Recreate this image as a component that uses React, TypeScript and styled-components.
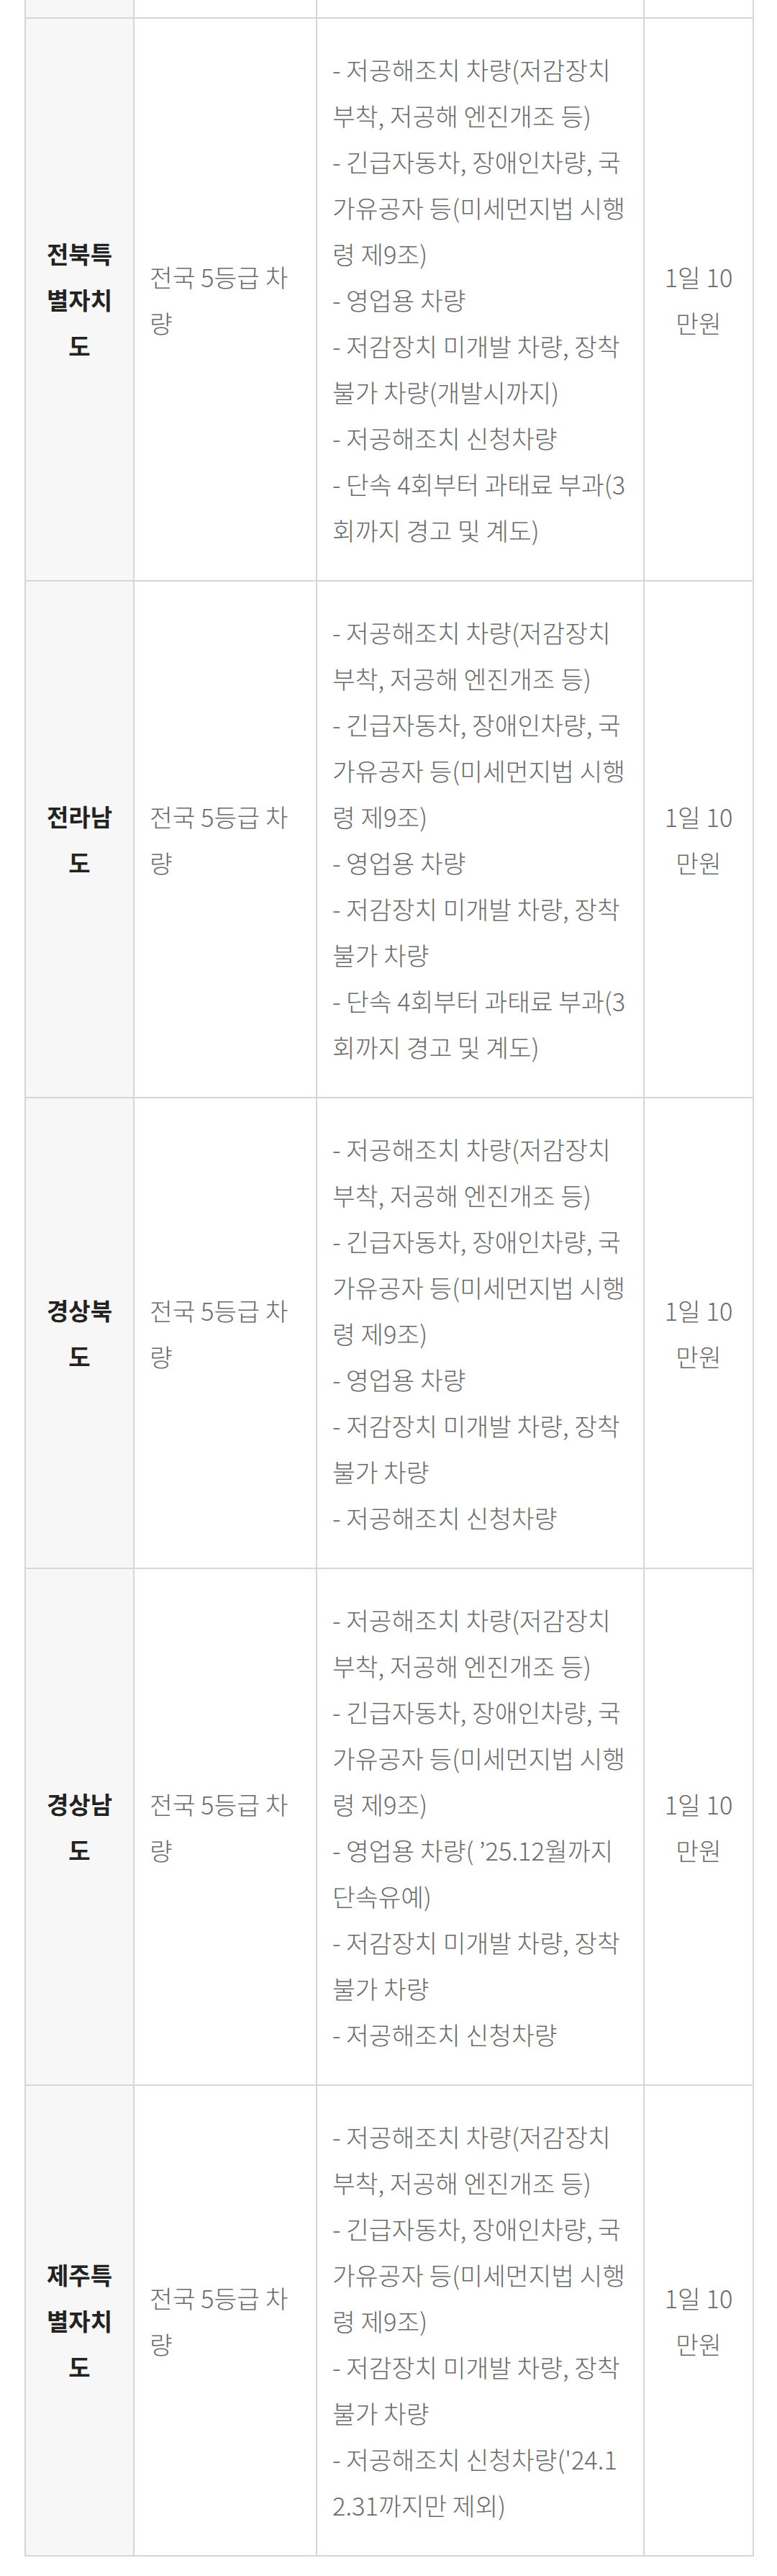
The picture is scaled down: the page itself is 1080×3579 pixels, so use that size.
import React from "react";
import styled, { createGlobalStyle } from "styled-components";

interface RegionRow {
  region: string;
  target: string[];
  exempt: string[][];
  fine: string[];
}

const common = {
  low: ["- 저공해조치 차량(저감장치", "부착, 저공해 엔진개조 등)"],
  urgent: ["- 긴급자동차, 장애인차량, 국", "가유공자 등(미세먼지법 시행", "령 제9조)"],
  business: ["- 영업용 차량"],
  notDev: ["- 저감장치 미개발 차량, 장착", "불가 차량"],
  applied: ["- 저공해조치 신청차량"],
  warn: ["- 단속 4회부터 과태료 부과(3", "회까지 경고 및 계도)"],
};

const target = ["전국 5등급 차", "량"];
const fine = ["1일 10", "만원"];

const rows: RegionRow[] = [
  {
    region: "전북특별자치도",
    target,
    exempt: [
      common.low,
      common.urgent,
      common.business,
      ["- 저감장치 미개발 차량, 장착", "불가 차량(개발시까지)"],
      common.applied,
      common.warn,
    ],
    fine,
  },
  {
    region: "전라남도",
    target,
    exempt: [common.low, common.urgent, common.business, common.notDev, common.warn],
    fine,
  },
  {
    region: "경상북도",
    target,
    exempt: [common.low, common.urgent, common.business, common.notDev, common.applied],
    fine,
  },
  {
    region: "경상남도",
    target,
    exempt: [
      common.low,
      common.urgent,
      ["- 영업용 차량( ’25.12월까지", "단속유예)"],
      common.notDev,
      common.applied,
    ],
    fine,
  },
  {
    region: "제주특별자치도",
    target,
    exempt: [
      common.low,
      common.urgent,
      common.notDev,
      ["- 저공해조치 신청차량('24.1", "2.31까지만 제외)"],
    ],
    fine,
  },
];

const App = () => {
  return (
    <>
      <GlobalStyle />
      <Page>
        <Table>
          <colgroup>
            <col style={{ width: 151 }} />
            <col style={{ width: 254 }} />
            <col style={{ width: 455 }} />
            <col style={{ width: 152 }} />
          </colgroup>
          <tbody>
            <ClippedRow>
              <RegionCell />
              <td />
              <td />
              <td />
            </ClippedRow>
            {rows.map((row) => (
              <tr key={row.region}>
                <RegionCell>{row.region}</RegionCell>
                <TargetCell>
                  {row.target.map((line) => (
                    <Line key={line}>{line}</Line>
                  ))}
                </TargetCell>
                <ExemptCell>
                  {row.exempt.map((item, i) => (
                    <Item key={i}>
                      {item.map((line) => (
                        <Line key={line}>{line}</Line>
                      ))}
                    </Item>
                  ))}
                </ExemptCell>
                <FineCell>
                  {row.fine.map((line) => (
                    <Line key={line}>{line}</Line>
                  ))}
                </FineCell>
              </tr>
            ))}
          </tbody>
        </Table>
      </Page>
    </>
  );
};

export default App;

const GlobalStyle = createGlobalStyle`
  html, body {
    margin: 0;
    padding: 0;
    background: #fff;
  }
  body {
    font-family: "Noto Sans CJK KR", "Noto Sans", sans-serif;
  }
`;

const Page = styled.div`
  width: 1080px;
  min-height: 3579px;
  padding: 0 33px 0 34px;
  box-sizing: border-box;
  background: #fff;
`;

const Table = styled.table`
  width: 1013px;
  table-layout: fixed;
  border-collapse: collapse;
  font-size: 34.5px;
  line-height: 64px;
  color: #6a6a6a;
  font-weight: 300;

  td {
    border: 2px solid #d6d6d6;
    vertical-align: middle;
  }
`;

const ClippedRow = styled.tr`
  td {
    height: 24px;
    padding: 0;
    border-top: none;
  }
`;

const RegionCell = styled.td`
  background: #f7f7f7;
  padding: 0 20px;
  text-align: center;
  color: #222;
  font-size: 33px;
  font-weight: 700;
`;

const TargetCell = styled.td`
  padding: 0 8px 0 21px;
  text-align: left;
`;

const ExemptCell = styled.td`
  padding: 38px 4px 38px 21px;
  text-align: left;
`;

const Item = styled.div`
  display: flex;
  flex-direction: column;
`;

const Line = styled.span`
  display: block;
  white-space: nowrap;
`;

const FineCell = styled.td`
  padding: 0 6px;
  text-align: center;
`;
